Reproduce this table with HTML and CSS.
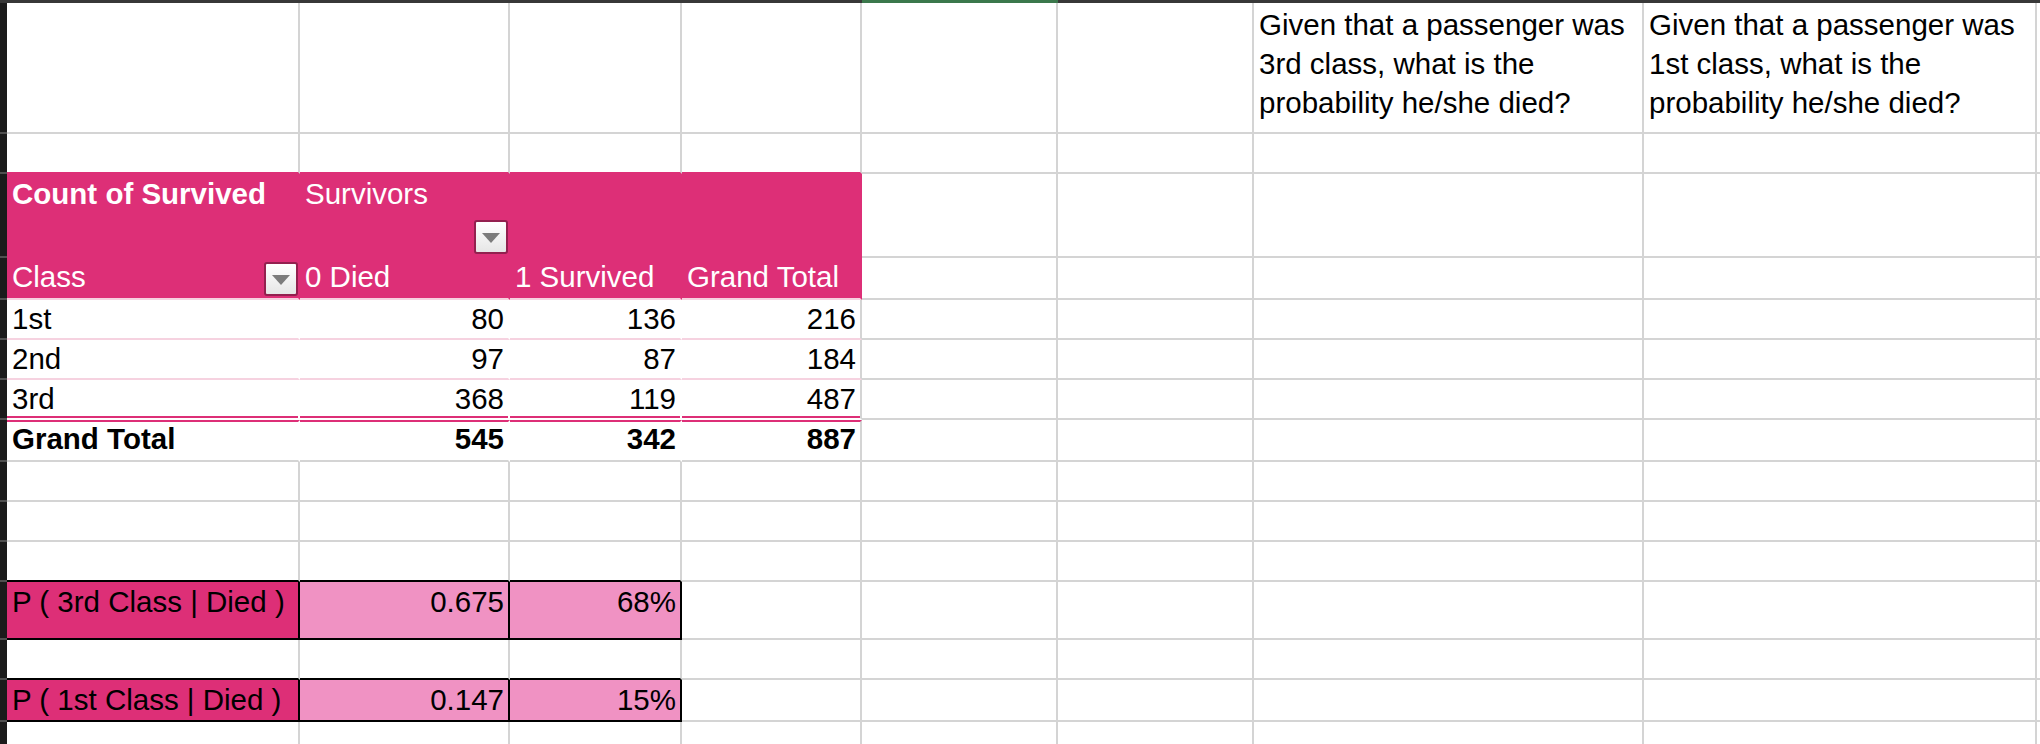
FILE: index.html
```html
<!DOCTYPE html>
<html lang="en">
<head>
<meta charset="utf-8">
<title>Titanic survivors pivot</title>
<link rel="stylesheet" href="styles.css">
</head>
<body>
<div class="sheet">
  <div class="edge edge-left"></div>
  <div class="edge edge-sel"></div>
  <div class="edge edge-right"></div>

  <!-- row 1 -->
  <div class="rh"></div>
  <div class="c"></div><div class="c"></div><div class="c"></div><div class="c"></div><div class="c"></div><div class="c"></div>
  <div class="c q">Given that a passenger was<br>3rd class, what is the<br>probability he/she died?</div>
  <div class="c q">Given that a passenger was<br>1st class, what is the<br>probability he/she died?</div>
  <div class="c"></div>

  <!-- row 2 -->
  <div class="rh"></div>
  <div class="c pv-above"></div><div class="c pv-above"></div><div class="c pv-above"></div><div class="c pv-above"></div>
  <div class="c"></div><div class="c"></div><div class="c"></div><div class="c"></div><div class="c"></div>

  <!-- row 3: pivot title -->
  <div class="rh"></div>
  <div class="c ph ph-top"><strong>Count of Survived</strong></div>
  <div class="c ph ph-top"><span>Survivors</span><span class="btn"></span></div>
  <div class="c ph ph-top"></div>
  <div class="c ph ph-top"></div>
  <div class="c"></div><div class="c"></div><div class="c"></div><div class="c"></div><div class="c"></div>

  <!-- row 4: pivot column headers -->
  <div class="rh"></div>
  <div class="c ph ph-cols"><span class="lbl">Class</span><span class="btn"></span></div>
  <div class="c ph ph-cols"><span class="lbl">0 Died</span></div>
  <div class="c ph ph-cols"><span class="lbl">1 Survived</span></div>
  <div class="c ph ph-cols"><span class="lbl">Grand Total</span></div>
  <div class="c"></div><div class="c"></div><div class="c"></div><div class="c"></div><div class="c"></div>

  <!-- row 5 -->
  <div class="rh"></div>
  <div class="c pd nv">1st</div>
  <div class="c pd nv num">80</div>
  <div class="c pd nv num">136</div>
  <div class="c pd num">216</div>
  <div class="c"></div><div class="c"></div><div class="c"></div><div class="c"></div><div class="c"></div>

  <!-- row 6 -->
  <div class="rh"></div>
  <div class="c pd nv">2nd</div>
  <div class="c pd nv num">97</div>
  <div class="c pd nv num">87</div>
  <div class="c pd num">184</div>
  <div class="c"></div><div class="c"></div><div class="c"></div><div class="c"></div><div class="c"></div>

  <!-- row 7 -->
  <div class="rh"></div>
  <div class="c pd pd-last nv">3rd</div>
  <div class="c pd pd-last nv num">368</div>
  <div class="c pd pd-last nv num">119</div>
  <div class="c pd pd-last num">487</div>
  <div class="c"></div><div class="c"></div><div class="c"></div><div class="c"></div><div class="c"></div>

  <!-- row 8: grand total -->
  <div class="rh"></div>
  <div class="c pt nv">Grand Total</div>
  <div class="c pt nv num">545</div>
  <div class="c pt nv num">342</div>
  <div class="c pt num">887</div>
  <div class="c"></div><div class="c"></div><div class="c"></div><div class="c"></div><div class="c"></div>

  <!-- row 9 -->
  <div class="rh"></div>
  <div class="c"></div><div class="c"></div><div class="c"></div><div class="c"></div><div class="c"></div><div class="c"></div><div class="c"></div><div class="c"></div><div class="c"></div>

  <!-- row 10 -->
  <div class="rh"></div>
  <div class="c"></div><div class="c"></div><div class="c"></div><div class="c"></div><div class="c"></div><div class="c"></div><div class="c"></div><div class="c"></div><div class="c"></div>

  <!-- row 11 -->
  <div class="rh"></div>
  <div class="c bk-b"></div><div class="c bk-b"></div><div class="c bk-b"></div>
  <div class="c"></div><div class="c"></div><div class="c"></div><div class="c"></div><div class="c"></div><div class="c"></div>

  <!-- row 12 -->
  <div class="rh"></div>
  <div class="c pa">P ( 3rd Class | Died )</div>
  <div class="c pb">0.675</div>
  <div class="c pb">68%</div>
  <div class="c"></div><div class="c"></div><div class="c"></div><div class="c"></div><div class="c"></div><div class="c"></div>

  <!-- row 13 -->
  <div class="rh"></div>
  <div class="c bk-b"></div><div class="c bk-b"></div><div class="c bk-b"></div>
  <div class="c"></div><div class="c"></div><div class="c"></div><div class="c"></div><div class="c"></div><div class="c"></div>

  <!-- row 14 -->
  <div class="rh"></div>
  <div class="c pa">P ( 1st Class | Died )</div>
  <div class="c pb">0.147</div>
  <div class="c pb">15%</div>
  <div class="c"></div><div class="c"></div><div class="c"></div><div class="c"></div><div class="c"></div><div class="c"></div>

  <!-- row 15 -->
  <div class="rh"></div>
  <div class="c"></div><div class="c"></div><div class="c"></div><div class="c"></div><div class="c"></div><div class="c"></div><div class="c"></div><div class="c"></div><div class="c"></div>
</div>
</body>
</html>
```

FILE: styles.css
```css
* { box-sizing: border-box; }

html, body {
  margin: 0;
  padding: 0;
  background: #ffffff;
}

body {
  width: 2040px;
  height: 744px;
  overflow: hidden;
  font-family: "Liberation Sans", Arial, Helvetica, sans-serif;
  font-size: 29.5px;
  color: #000000;
}

.sheet {
  display: grid;
  grid-template-columns: 7px 293px 210px 172px 180px 196px 196px 390px 393px 3px;
  grid-template-rows: 3px 131px 40px 84px 42px 40px 40px 40px 42px 40px 40px 40px 58px 40px 42px 40px;
}

/* column header edge at the very top */
.edge { background: #383838; }
.edge-left { grid-column: 1 / 6; }
.edge-sel { background: #3b784c; }
.edge-right { grid-column: 7 / 11; }

/* row header strip on the left */
.rh {
  background: #1b1b1b;
  border-bottom: 2px solid #505050;
}

/* generic cell */
.c {
  display: flex;
  align-items: flex-end;
  padding: 0 4px 2px 5px;
  border-right: 2px solid #d4d4d4;
  border-bottom: 2px solid #d4d4d4;
  white-space: nowrap;
  overflow: hidden;
}

/* wrapped question text */
.q {
  display: block;
  white-space: normal;
  line-height: 39px;
  padding-top: 2px;
}

/* pivot table */
.pv-above { border-bottom-color: #dd2f77; }

.ph {
  background: #dd2f77;
  color: #ffffff;
  border-right-color: #dd2f77;
  padding-right: 0;
  justify-content: space-between;
}

.ph-top {
  border-bottom-color: #dd2f77;
  align-items: flex-start;
  padding-top: 3px;
  padding-bottom: 0;
}

.ph-top .btn { align-self: flex-end; }

.ph-cols {
  border-bottom-color: #f6d2e0;
  padding-bottom: 0;
}

.lbl { margin-bottom: 4px; }

.btn {
  flex: none;
  width: 34px;
  height: 34px;
  margin-bottom: 2px;
  border: 2px solid #93204f;
  border-radius: 3px;
  background: linear-gradient(#ffffff, #e6e6e6);
  display: flex;
  align-items: center;
  justify-content: center;
}

.btn::after {
  content: "";
  width: 0;
  height: 0;
  border-left: 9px solid transparent;
  border-right: 9px solid transparent;
  border-top: 10px solid #7c7c7c;
  margin-top: 2px;
}

.pd { border-bottom-color: #f6d2e0; }
.nv { border-right-color: #ffffff; }
.num { justify-content: flex-end; }

.pd-last {
  border-bottom-color: #ffffff;
  box-shadow: inset 0 -2px 0 #dd2f77;
}

.pt {
  border-top: 2px solid #dd2f77;
  font-weight: bold;
  padding-bottom: 4px;
}

/* probability boxes */
.bk-b { border-bottom-color: #000000; }

.pa,
.pb {
  align-items: flex-start;
  padding-top: 3px;
  border-right-color: #000000;
  border-bottom-color: #000000;
}

.pa { background: #dd2f77; }

.pb {
  background: #f092c3;
  justify-content: flex-end;
}
```
